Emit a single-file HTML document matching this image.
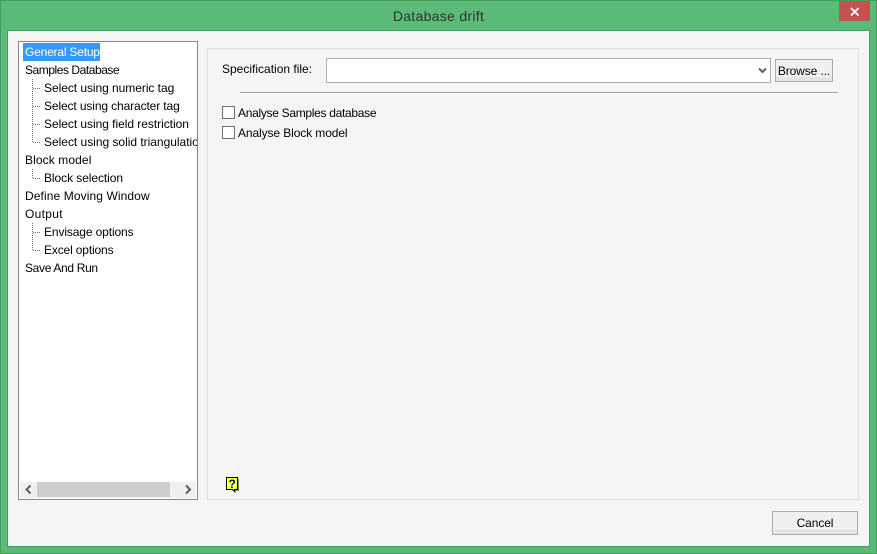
<!DOCTYPE html>
<html>
<head>
<meta charset="utf-8">
<style>
html,body{margin:0;padding:0}
body{width:877px;height:554px;overflow:hidden;position:relative;background:#5abb77;font-family:"Liberation Sans",sans-serif;font-size:12px;color:#000}
div,span{position:absolute;box-sizing:border-box}
.t{white-space:nowrap;line-height:16px;height:16px}
.btn{background:linear-gradient(#f0f0f0 0,#f0f0f0 80%,#e5e5e5 80%);border:1px solid #acacac;text-align:center}
.dv{width:1px;background-image:linear-gradient(#777 50%,transparent 50%);background-size:1px 2px}
.dh{height:1px;background-image:linear-gradient(90deg,#777 50%,transparent 50%);background-size:2px 1px}
.cb{width:13px;height:13px;background:#fff;border:1px solid #707070}
</style>
</head>
<body>
<div style="left:0;top:0;width:877px;height:554px;border:1px solid #479a60"></div>
<div class="t" style="left:0;top:8px;width:877px;text-align:center;font-size:14px;color:#333;letter-spacing:.3px">Database drift</div>
<div style="left:839px;top:1px;width:31px;height:20px;background:#c75050"></div>
<svg style="position:absolute;left:849px;top:6px" width="12" height="11"><path d="M2 2L9.500 9.500M9.500 2L2 9.500" stroke="#fff" stroke-width="1.800" fill="none"/></svg>

<div style="left:7px;top:30px;width:863px;height:517px;background:#f5f5f5;border:1px solid #479a60"></div>

<!-- tree -->
<div style="left:18px;top:41px;width:180px;height:459px;background:#fff;border:1px solid #828790"></div>
<div style="left:23px;top:43px;width:77px;height:18px;background:#3399ff"></div>
<div class="t" style="left:25px;top:44px;color:#fff;letter-spacing:-.2px">General Setup</div>
<div class="t" style="left:25px;top:62px;letter-spacing:-.45px">Samples Database</div>
<div class="t" style="left:44px;top:80px;letter-spacing:-.05px">Select using numeric tag</div>
<div class="t" style="left:44px;top:98px;letter-spacing:-.12px">Select using character tag</div>
<div class="t" style="left:44px;top:116px;letter-spacing:-.04px">Select using field restriction</div>
<div style="left:44px;top:134px;width:153px;height:16px;overflow:hidden"><span class="t" style="left:0;top:0;letter-spacing:-.02px">Select using solid triangulation</span></div>
<div class="t" style="left:25px;top:152px;letter-spacing:.1px">Block model</div>
<div class="t" style="left:44px;top:170px;letter-spacing:-.07px">Block selection</div>
<div class="t" style="left:25px;top:188px;letter-spacing:.1px">Define Moving Window</div>
<div class="t" style="left:25px;top:206px;letter-spacing:.3px">Output</div>
<div class="t" style="left:44px;top:224px;letter-spacing:-.12px">Envisage options</div>
<div class="t" style="left:44px;top:242px;letter-spacing:-.15px">Excel options</div>
<div class="t" style="left:25px;top:260px;letter-spacing:-.33px">Save And Run</div>

<div class="dv" style="left:32px;top:79px;height:64px"></div>
<div class="dh" style="left:33px;top:88px;width:8px"></div>
<div class="dh" style="left:33px;top:106px;width:8px"></div>
<div class="dh" style="left:33px;top:124px;width:8px"></div>
<div class="dh" style="left:33px;top:142px;width:8px"></div>
<div class="dv" style="left:32px;top:169px;height:10px"></div>
<div class="dh" style="left:33px;top:178px;width:8px"></div>
<div class="dv" style="left:32px;top:223px;height:28px"></div>
<div class="dh" style="left:33px;top:232px;width:8px"></div>
<div class="dh" style="left:33px;top:250px;width:8px"></div>

<!-- scrollbar -->
<div style="left:20px;top:482px;width:176px;height:16px;background:#f0f0f0"></div>
<div style="left:37px;top:482px;width:133px;height:15px;background:#cdcdcd"></div>
<svg style="position:absolute;left:24px;top:484px" width="9" height="11"><path d="M6.500 1.500L2.500 5.500L6.500 9.500" stroke="#606060" stroke-width="2" fill="none"/></svg>
<svg style="position:absolute;left:184px;top:484px" width="9" height="11"><path d="M2 1.500L6 5.500L2 9.500" stroke="#606060" stroke-width="2" fill="none"/></svg>

<!-- panel -->
<div style="left:207px;top:48px;width:652px;height:452px;border:1px solid #dfdfdf"></div>
<div class="t" style="left:222px;top:61px">Specification file:</div>
<div style="left:326px;top:58px;width:445px;height:25px;background:#fff;border:1px solid #abadb3"></div>
<svg style="position:absolute;left:758px;top:67px" width="10" height="8"><path d="M1 1.500L4.500 5L8 1.500" stroke="#606060" stroke-width="2" fill="none"/></svg>
<div class="btn t" style="left:775px;top:59px;width:58px;height:23px;line-height:22px;letter-spacing:-.1px">Browse ...</div>
<div style="left:240px;top:92px;width:598px;height:1px;background:#a0a0a0"></div>
<div style="left:240px;top:93px;width:598px;height:1px;background:#fff"></div>

<div class="cb" style="left:222px;top:106px"></div>
<div class="t" style="left:238px;top:105px;letter-spacing:-.3px">Analyse Samples database</div>
<div class="cb" style="left:222px;top:126px"></div>
<div class="t" style="left:238px;top:125px;letter-spacing:-.1px">Analyse Block model</div>

<!-- help icon -->
<svg style="position:absolute;left:224px;top:476px" width="16" height="18" shape-rendering="crispEdges">
<defs><pattern id="d" width="2" height="2" patternUnits="userSpaceOnUse"><rect width="2" height="2" fill="#fff"/><rect width="1" height="1" fill="#eded30"/></pattern></defs>
<path d="M2.500 1.500H13.500V13.500H10.500V15.500L8.500 13.500H2.500Z" fill="url(#d)" stroke="#000" stroke-width="1"/>
<path d="M14.500 3V14.500H11.500V16.500" fill="none" stroke="#808080" stroke-width="1"/>
<text x="4.500" y="12" font-family="Liberation Sans,sans-serif" font-size="12" font-weight="bold" fill="#00008b">?</text>
</svg>

<div class="btn t" style="left:772px;top:511px;width:86px;height:24px;line-height:22px;letter-spacing:-.1px">Cancel</div>
</body>
</html>
